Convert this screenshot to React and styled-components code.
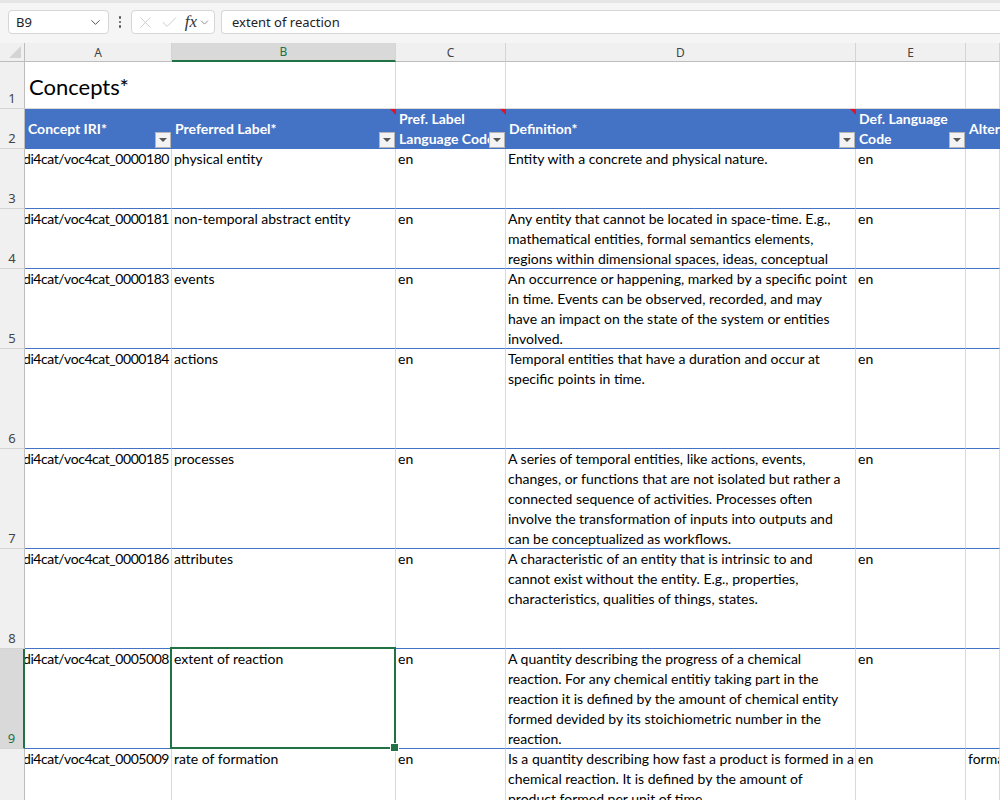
import React from "react";
import styled, { createGlobalStyle } from "styled-components";
import { ChevronDown, X, Check } from "lucide-react";

const GlobalStyle = createGlobalStyle`
  html, body {
    margin: 0;
    padding: 0;
    background: #ffffff;
    overflow: hidden;
  }
  * {
    box-sizing: border-box;
  }
`;

const COLS = "25px 147px 224px 110px 350px 110px 1fr";
const GREEN = "#217346";
const BLUE = "#4472c4";
const CELL_FONT = `"Lato", "Liberation Sans", sans-serif`;
const UI_FONT = `"Noto Sans", "Open Sans", sans-serif`;

const Shell = styled.div`
  width: 1000px;
  height: 800px;
  overflow: hidden;
  display: flex;
  flex-direction: column;
`;

const FormulaBar = styled.div`
  height: 43px;
  flex: none;
  background: #f5f5f5;
  border-top: 3px solid #e6e6e6;
  display: flex;
  align-items: flex-start;
  padding: 7px 0 0 8px;
  font-family: ${UI_FONT};
`;

const NameBox = styled.div`
  width: 101px;
  height: 24px;
  background: #fff;
  border: 1px solid #d6d6d6;
  border-radius: 4px;
  display: flex;
  align-items: center;
  justify-content: space-between;
  padding: 0 5px 0 7px;
  font-size: 13px;
  color: #222;
`;

const Kebab = styled.div`
  width: 22px;
  height: 24px;
  display: flex;
  flex-direction: column;
  align-items: center;
  justify-content: center;
  gap: 2px;

  span {
    width: 2.5px;
    height: 2.5px;
    border-radius: 50%;
    background: #555;
  }
`;

const FxBox = styled.div`
  width: 84px;
  height: 24px;
  background: #fff;
  border: 1px solid #d6d6d6;
  border-radius: 4px;
  display: flex;
  align-items: center;
  padding: 0 3px 0 4px;
  gap: 5px;
  color: #c0c0c0;
`;

const Fx = styled.span`
  font-family: "Liberation Serif", serif;
  font-style: italic;
  font-size: 17px;
  color: #333;
  margin-left: 1px;
  margin-right: -4px;
`;

const FormulaInput = styled.div`
  flex: 1;
  height: 24px;
  margin-left: 6px;
  background: #fff;
  border: 1px solid #d6d6d6;
  border-right: none;
  border-radius: 4px 0 0 4px;
  display: flex;
  align-items: center;
  padding-left: 10px;
  font-size: 13px;
  color: #222;
`;

const Sheet = styled.div`
  flex: 1;
  display: flex;
  flex-direction: column;
  overflow: hidden;
`;

const Row = styled.div`
  display: grid;
  grid-template-columns: ${COLS};
  height: ${p => p.$h}px;
  flex: none;
`;

const ColHead = styled.div`
  font-family: ${UI_FONT};
  font-size: 12px;
  color: ${p => (p.$active ? GREEN : "#444")};
  background: ${p => (p.$active ? "#d9d9d9" : "#f0f0f0")};
  border-right: 1px solid #d4d4d4;
  border-bottom: ${p => (p.$active ? `2px solid ${GREEN}` : "1px solid #bdbdbd")};
  display: flex;
  align-items: center;
  justify-content: center;
  position: relative;
`;

const Corner = styled(ColHead)`
  border-right: 1px solid #bdbdbd;

  &::after {
    content: "";
    position: absolute;
    right: 3px;
    bottom: 3px;
    border-style: solid;
    border-width: 0 0 12px 12px;
    border-color: transparent transparent #d4d4d4 transparent;
  }
`;

const RowHead = styled.div`
  font-family: ${UI_FONT};
  font-size: 13px;
  color: ${p => (p.$active ? GREEN : "#444")};
  background: ${p => (p.$active ? "#d9d9d9" : "#f0f0f0")};
  border-right: ${p => (p.$active ? `2px solid ${GREEN}` : "1px solid #bdbdbd")};
  border-bottom: 1px solid #d4d4d4;
  display: flex;
  align-items: flex-end;
  justify-content: center;
  padding-bottom: 1px;
`;

const Cell = styled.div`
  font-family: ${CELL_FONT};
  font-size: 14px;
  line-height: 20px;
  color: #000;
  background: #fff;
  border-right: 1px solid #d9d9d9;
  border-bottom: 1px solid ${p => (p.$band ? BLUE : "#d9d9d9")};
  padding: 0 2px;
  overflow: ${p => (p.$sel ? "visible" : "hidden")};
  white-space: nowrap;
  position: relative;
  display: flex;
  flex-direction: column;
  align-items: ${p => (p.$right ? "flex-end" : "flex-start")};
  letter-spacing: ${p => (p.$right ? "-0.45px" : "normal")};
`;

const TitleCell = styled(Cell)`
  font-size: 22px;
  line-height: 28px;
  justify-content: flex-end;
  padding: 0 0 7px 4px;
  overflow: visible;
  border-right: ${p => (p.$first ? "none" : "1px solid #d9d9d9")};
`;

const HeadCell = styled.div`
  font-family: ${CELL_FONT};
  font-size: 14px;
  font-weight: 700;
  line-height: 20px;
  color: #fff;
  background: ${BLUE};
  padding: 0 2px 0 3px;
  overflow: hidden;
  white-space: nowrap;
  position: relative;
  display: flex;
  flex-direction: column;
  justify-content: center;
`;

const FilterButton = styled.div`
  position: absolute;
  right: 1px;
  bottom: 1px;
  width: 16px;
  height: 16px;
  background: #f3f3f3;
  border: 1px solid #b5b5b5;
  display: flex;
  align-items: center;
  justify-content: center;

  &::after {
    content: "";
    border-style: solid;
    border-width: 4px 4px 0 4px;
    border-color: #555 transparent transparent transparent;
  }
`;

const CommentMark = styled.div`
  position: absolute;
  top: 0;
  right: 0;
  border-style: solid;
  border-width: 0 6px 6px 0;
  border-color: transparent #e81123 transparent transparent;
`;

const Selection = styled.div`
  position: absolute;
  z-index: 3;
  left: -2px;
  top: -2px;
  right: -1px;
  bottom: -1px;
  border: 2px solid ${GREEN};
  pointer-events: none;

  &::after {
    content: "";
    position: absolute;
    right: -5px;
    bottom: -5px;
    width: 7px;
    height: 7px;
    background: ${GREEN};
    border: 1px solid #fff;
  }
`;

const Line = styled.div``;

const columns = ["A", "B", "C", "D", "E", ""];

const headers = [
  { lines: ["Concept IRI*"] },
  { lines: ["Preferred Label*"], comment: true },
  { lines: ["Pref. Label", "Language Code"], comment: true },
  { lines: ["Definition*"], comment: true },
  { lines: ["Def. Language", "Code"] },
  { lines: ["Alternate Labels"], noFilter: true },
];

const rows = [
  {
    n: 3, h: 60, id: "0000180", label: "physical entity",
    def: ["Entity with a concrete and physical nature."],
  },
  {
    n: 4, h: 60, id: "0000181", label: "non-temporal abstract entity",
    def: [
      "Any entity that cannot be located in space-time. E.g.,",
      "mathematical entities, formal semantics elements,",
      "regions within dimensional spaces, ideas, conceptual",
    ],
  },
  {
    n: 5, h: 80, id: "0000183", label: "events",
    def: [
      "An occurrence or happening, marked by a specific point",
      "in time. Events can be observed, recorded, and may",
      "have an impact on the state of the system or entities",
      "involved.",
    ],
  },
  {
    n: 6, h: 100, id: "0000184", label: "actions",
    def: [
      "Temporal entities that have a duration and occur at",
      "specific points in time.",
    ],
  },
  {
    n: 7, h: 100, id: "0000185", label: "processes",
    def: [
      "A series of temporal entities, like actions, events,",
      "changes, or functions that are not isolated but rather a",
      "connected sequence of activities. Processes often",
      "involve the transformation of inputs into outputs and",
      "can be conceptualized as workflows.",
    ],
  },
  {
    n: 8, h: 100, id: "0000186", label: "attributes",
    def: [
      "A characteristic of an entity that is intrinsic to and",
      "cannot exist without the entity. E.g., properties,",
      "characteristics, qualities of things, states.",
    ],
  },
  {
    n: 9, h: 100, id: "0005008", label: "extent of reaction", selected: true,
    def: [
      "A quantity describing the progress of a chemical",
      "reaction. For any chemical entitiy taking part in the",
      "reaction it is defined by the amount of chemical entity",
      "formed devided by its stoichiometric number in the",
      "reaction.",
    ],
  },
  {
    n: 10, h: 100, id: "0005009", label: "rate of formation",
    alt: "formation rate",
    def: [
      "Is a quantity describing how fast a product is formed in a",
      "chemical reaction. It is defined by the amount of",
      "product formed per unit of time.",
    ],
  },
];

export default function App() {
  return (
    <Shell>
      <GlobalStyle />
      <FormulaBar>
        <NameBox>
          B9
          <ChevronDown size={15} strokeWidth={1.5} color="#444" />
        </NameBox>
        <Kebab>
          <span />
          <span />
          <span />
        </Kebab>
        <FxBox>
          <X size={19} strokeWidth={1} />
          <Check size={19} strokeWidth={1} />
          <Fx>fx</Fx>
          <ChevronDown size={13} strokeWidth={1.5} color="#777" />
        </FxBox>
        <FormulaInput>extent of reaction</FormulaInput>
      </FormulaBar>

      <Sheet>
        <Row $h={19}>
          <Corner />
          {columns.map((c, i) => (
            <ColHead key={i} $active={c === "B"}>
              {c}
            </ColHead>
          ))}
        </Row>

        <Row $h={47}>
          <RowHead>1</RowHead>
          <TitleCell $first>Concepts*</TitleCell>
          <Cell />
          <Cell />
          <Cell />
          <Cell />
          <Cell />
        </Row>

        <Row $h={40}>
          <RowHead>2</RowHead>
          {headers.map((h, i) => (
            <HeadCell key={i}>
              {h.lines.map(l => (
                <Line key={l}>{l}</Line>
              ))}
              {h.comment && <CommentMark />}
              {!h.noFilter && <FilterButton />}
            </HeadCell>
          ))}
        </Row>

        {rows.map(r => (
          <Row key={r.n} $h={r.h}>
            <RowHead $active={r.selected}>{r.n}</RowHead>
            <Cell $band $right>
              https://w3id.org/nfdi4cat/voc4cat_{r.id}
            </Cell>
            <Cell $band $sel={r.selected}>
              {r.label}
              {r.selected && <Selection />}
            </Cell>
            <Cell $band>en</Cell>
            <Cell $band>
              {r.def.map(l => (
                <Line key={l}>{l}</Line>
              ))}
            </Cell>
            <Cell $band>en</Cell>
            <Cell $band>{r.alt}</Cell>
          </Row>
        ))}
      </Sheet>
    </Shell>
  );
}
